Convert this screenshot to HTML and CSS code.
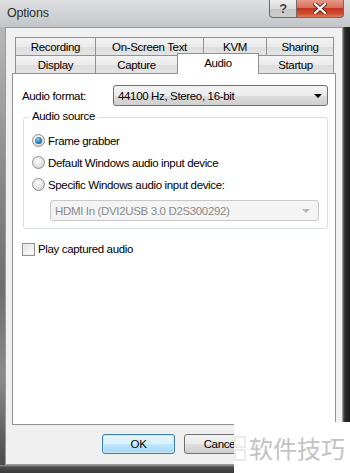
FILE: index.html
```html
<!DOCTYPE html>
<html>
<head>
<meta charset="utf-8">
<link rel="stylesheet" href="styles.css">
</head>
<body>
<div class="window">
  <div class="titlebar">
    <span class="title">Options</span>
    <div class="caption-buttons">
      <div class="cap-btn help">?</div>
      <div class="cap-btn close">
        <svg width="14" height="11" viewBox="0 0 14 11"><path d="M2 1 L12 10 M12 1 L2 10" stroke="#5a2a22" stroke-width="4" stroke-linecap="square"/><path d="M2 1 L12 10 M12 1 L2 10" stroke="#fff" stroke-width="2.2" stroke-linecap="square"/></svg>
      </div>
    </div>
  </div>
  <div class="middle">
    <div class="frame-left"></div>
    <div class="client">
      <div class="tabstrip">
        <div class="tabrow row1">
          <div class="tab">Recording</div>
          <div class="tab">On-Screen Text</div>
          <div class="tab">KVM</div>
          <div class="tab">Sharing</div>
        </div>
        <div class="tabrow row2">
          <div class="tab">Display</div>
          <div class="tab">Capture</div>
          <div class="tab selected">Audio</div>
          <div class="tab">Startup</div>
        </div>
      </div>
      <div class="panel">
        <div class="format-row">
          <span class="label">Audio format:</span>
          <div class="combo">
            <span>44100 Hz, Stereo, 16-bit</span>
            <svg class="arrow" width="8" height="4" viewBox="0 0 8 4"><path d="M0 0 H8 L4 4 Z" fill="#000"/></svg>
          </div>
        </div>
        <div class="group">
          <span class="legend">Audio source</span>
          <div class="radio-row"><span class="radio checked"></span><span>Frame grabber</span></div>
          <div class="radio-row"><span class="radio"></span><span>Default Windows audio input device</span></div>
          <div class="radio-row"><span class="radio"></span><span>Specific Windows audio input device:</span></div>
          <div class="combo disabled">
            <span>HDMI In (DVI2USB 3.0 D2S300292)</span>
            <svg class="arrow" width="8" height="4" viewBox="0 0 8 4"><path d="M0 0 H8 L4 4 Z" fill="#b8b8b8"/></svg>
          </div>
        </div>
        <div class="check-row"><span class="checkbox"></span><span>Play captured audio</span></div>
      </div>
      <div class="button-row">
        <div class="btn default">OK</div>
        <div class="btn">Cancel</div>
      </div>
    </div>
    <div class="frame-right"></div>
  </div>
  <div class="frame-bottom"></div>
  <div class="watermark">
    <svg class="wm-icon" width="12" height="30" viewBox="0 0 12 30"><rect x="1" y="4" width="10" height="10" fill="none" stroke="#e4e4e4" stroke-width="1.5"/><rect x="1" y="17" width="10" height="10" fill="none" stroke="#e4e4e4" stroke-width="1.5"/></svg>
    <span>软件技巧</span>
  </div>
</div>
</body>
</html>
```

FILE: styles.css
```css
* { box-sizing: border-box; }
html, body { margin: 0; padding: 0; }
body {
  width: 350px;
  height: 473px;
  overflow: hidden;
  font-family: "Liberation Sans", Arial, sans-serif;
  font-size: 11.5px;
  letter-spacing: -0.35px;
  color: #000;
}
.window {
  position: relative;
  width: 350px;
  height: 473px;
  display: flex;
  flex-direction: column;
  background: linear-gradient(90deg, #8a8a8a 0, #a8a8a8 5px, #c8c9cb 6px, #c8c9cb 343px, #3a3a3a 344px, #1e1e1e 350px);
}
.titlebar {
  height: 27px;
  flex: none;
  display: flex;
  justify-content: space-between;
  align-items: flex-start;
  background: linear-gradient(180deg, #dedfe1 0%, #cfd0d2 60%, #c4c5c8 100%);
}
.title {
  margin: 6px 0 0 7px;
  font-size: 12.5px;
  letter-spacing: -0.2px;
  color: #2e2e2e;
}
.caption-buttons {
  display: flex;
  margin-right: 6px;
}
.cap-btn {
  height: 18px;
  display: flex;
  align-items: center;
  justify-content: center;
  border: 1px solid #6b6b6b;
  border-top: none;
}
.help {
  width: 28px;
  border-radius: 0 0 0 4px;
  background: linear-gradient(180deg, #eeeeee 0%, #dadada 50%, #c4c4c4 51%, #cfcfcf 100%);
  color: #3a3a3a;
  font-weight: bold;
  font-size: 13px;
  text-shadow: 0 0 2px #fff;
}
.close {
  width: 47px;
  border-left: none;
  border-radius: 0 0 4px 0;
  background: linear-gradient(180deg, #e79a88 0%, #d8705c 45%, #c3331c 50%, #cf4d34 80%, #e07a60 100%);
}
.middle {
  flex: 1;
  display: flex;
}
.frame-left {
  width: 5px;
  flex: none;
  background: linear-gradient(180deg, #b8b8b8 0%, #8e8e8e 30%, #6e6e6e 60%, #8c8c8c 80%, #4a4a4a 100%);
}
.frame-right {
  width: 7px;
  flex: none;
  background: linear-gradient(90deg, #6a6a6a 0, #2a2a2a 2px, #1c1c1c 100%);
}
.frame-bottom {
  height: 8px;
  flex: none;
  background: linear-gradient(180deg, #9a9a9a 0, #4c4c4c 2px, #3a3a3a 100%);
}
.client {
  flex: 1;
  background: #f0f0f0;
  border: 1px solid #9a9a9a;
  padding: 9px 6px 0 6px;
  display: flex;
  flex-direction: column;
}
.tabstrip {
  padding: 0 2px 0 3px;
  position: relative;
  z-index: 1;
}
.tabrow {
  display: grid;
  height: 18px;
}
.row1 { grid-template-columns: 81px 108px 63px 67px; }
.row2 { grid-template-columns: 81px 82px 80px 76px; }
.tab {
  border: 1px solid #8e9196;
  border-left: none;
  border-bottom: none;
  background: linear-gradient(180deg, #f3f3f3 0%, #ebebeb 50%, #dddddd 51%, #e4e4e4 100%);
  display: flex;
  align-items: center;
  justify-content: center;
  padding-top: 1px;
}
.tab:first-child { border-left: 1px solid #8e9196; }
.tab.selected {
  background: #fff;
  margin: -2px -1px -1px -1px;
  border-left: 1px solid #8e9196;
  align-items: flex-start;
  padding-top: 3px;
  position: relative;
  z-index: 2;
}
.panel {
  background: #fff;
  border: 1px solid #8e9196;
  height: 352px;
  width: 324px;
  padding: 11px 0 0 9px;
  display: flex;
  flex-direction: column;
}
.format-row {
  display: flex;
  align-items: center;
  height: 21px;
}
.format-row .label {
  width: 91px;
}
.combo {
  width: 215px;
  height: 21px;
  border: 1px solid #707070;
  border-radius: 3px;
  background: linear-gradient(180deg, #f2f2f2 0%, #ebebeb 50%, #dddddd 51%, #cfcfcf 100%);
  display: flex;
  align-items: center;
  justify-content: space-between;
  padding: 0 5px 0 4px;
}
.combo .arrow { flex: none; }
.group {
  margin: 11px 0 0 1px;
  width: 305px;
  height: 112px;
  border: 1px solid #d5dfe5;
  border-radius: 3px;
  position: relative;
  padding: 12px 0 0 8px;
  display: flex;
  flex-direction: column;
}
.legend {
  position: absolute;
  top: -8px;
  left: 5px;
  background: #fff;
  padding: 0 3px;
}
.radio-row {
  display: flex;
  align-items: center;
  height: 21px;
  gap: 3px;
}
.radio-row + .radio-row { margin-top: 1px; }
.radio {
  width: 13px;
  height: 13px;
  border-radius: 50%;
  border: 1px solid #8f8f8f;
  background: radial-gradient(circle at 40% 35%, #ffffff 0%, #e8e8e8 45%, #c9c9c9 100%);
  display: flex;
  align-items: center;
  justify-content: center;
}
.radio.checked::after {
  content: "";
  width: 7px;
  height: 7px;
  border-radius: 50%;
  background: radial-gradient(circle at 40% 35%, #8ad0f0 0%, #2a7fb8 50%, #144a72 100%);
}
.combo.disabled {
  width: 269px;
  margin: 5px 0 0 18px;
  border-color: #c8c8c8;
  background: #f4f4f4;
  color: #8a8a8a;
  padding-right: 8px;
}
.check-row {
  display: flex;
  align-items: center;
  gap: 3px;
  margin-top: 12px;
  height: 16px;
}
.checkbox {
  width: 13px;
  height: 13px;
  border: 1px solid #8f8f8f;
  background: linear-gradient(135deg, #dcdcdc 0%, #f4f4f4 60%, #ffffff 100%);
  box-shadow: inset 0 0 0 1px #f0f0f0;
}
.button-row {
  display: flex;
  gap: 9px;
  padding: 9px 0 0 90px;
}
.btn {
  width: 73px;
  height: 20px;
  border: 1px solid #707070;
  border-radius: 3px;
  background: linear-gradient(180deg, #f2f2f2 0%, #ebebeb 50%, #dddddd 51%, #cfcfcf 100%);
  display: flex;
  align-items: center;
  justify-content: center;
}
.btn.default {
  border-color: #3c7fb1;
  background: linear-gradient(180deg, #eaf6fd 0%, #d9f0fc 50%, #bee6fd 51%, #a7d9f5 100%);
  box-shadow: inset 0 0 0 1px #c8e8f8;
}
.watermark {
  position: absolute;
  left: 234px;
  top: 422px;
  width: 116px;
  height: 51px;
  background: #fff;
  display: flex;
  align-items: center;
  gap: 3px;
  font-family: "Noto Sans CJK SC", sans-serif;
  font-size: 24px;
  letter-spacing: 0;
  color: #c2c2c2;
}
.wm-icon { flex: none; }
```
